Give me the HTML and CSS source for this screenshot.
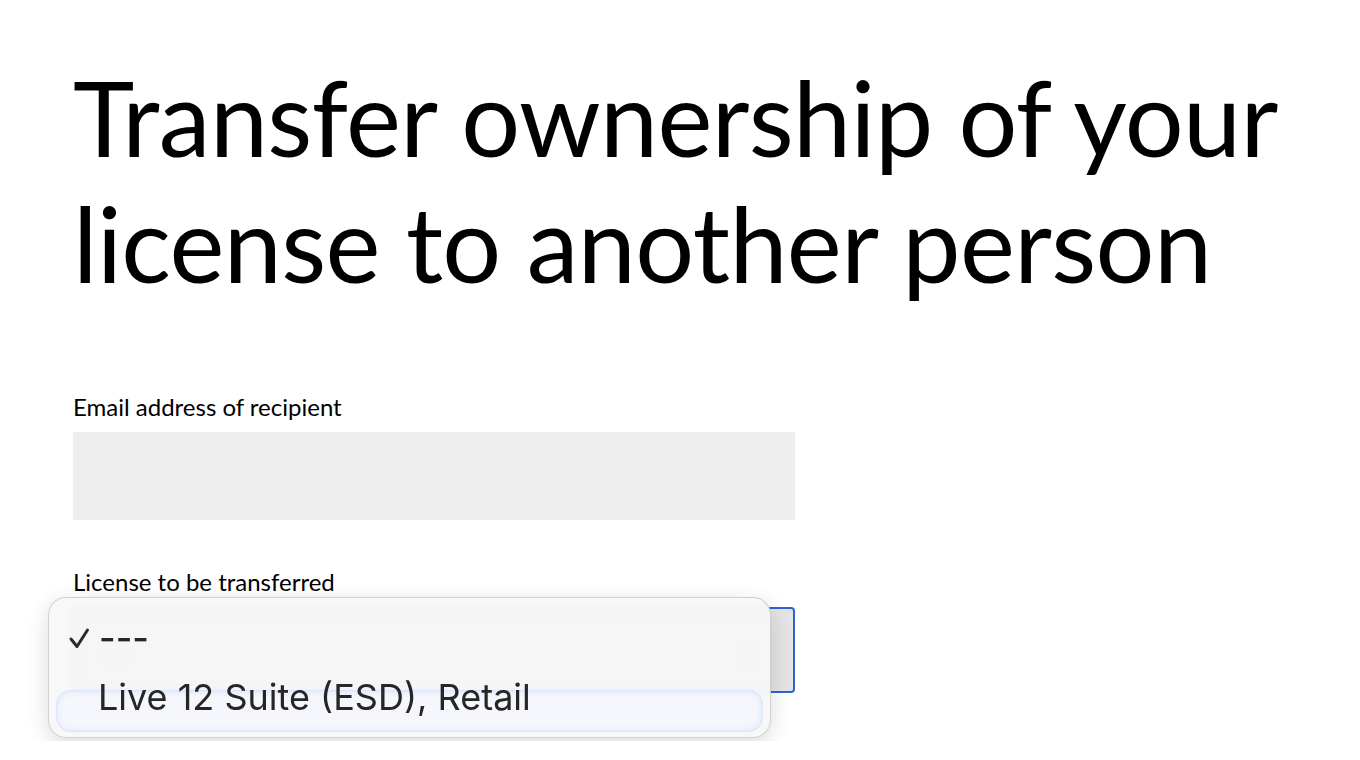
FILE: index.html
```html
<!DOCTYPE html>
<html lang="en">
<head>
  <meta charset="UTF-8">
  <meta name="viewport" content="width=device-width, initial-scale=1.0">
  <title>Transfer license</title>
  <link rel="stylesheet" href="styles.css">
</head>
<body>
  <main class="page">
    <h1>Transfer ownership of your license to another person</h1>

    <form class="transfer-form">
      <div class="field">
        <label for="recipient">Email address of recipient</label>
        <input type="email" id="recipient" class="text-input">
      </div>

      <div class="field">
        <label for="license">License to be transferred</label>
        <div class="select-wrap">
          <div class="select" id="license">
            <span class="select-value">---</span>
            <svg class="chevron" width="12" height="18" viewBox="0 0 12 18">
              <path d="M2 7l4-4 4 4M2 11l4 4 4-4" fill="none" stroke="#888" stroke-width="1.6" stroke-linecap="round" stroke-linejoin="round"/>
            </svg>
          </div>

          <!-- open popup list -->
          <div class="menu">
            <div class="menu-item checked">
              <svg class="check" width="22" height="22" viewBox="0 0 22 22">
                <path d="M3 12l6 7.5L19.5 3" fill="none" stroke="#2b2b2b" stroke-width="3" stroke-linecap="round" stroke-linejoin="round"/>
              </svg>
              <span>---</span>
            </div>
            <div class="menu-item active">
              <span>Live 12 Suite (ESD), Retail</span>
            </div>
          </div>
        </div>
      </div>
    </form>
  </main>
</body>
</html>
```

FILE: styles.css
```css
body {
  margin: 0;
  background: #fff;
  color: #000;
  font-family: Lato, "Noto Sans", sans-serif;
}
.page {
  padding: 54px 73px 0;
}
h1 {
  margin: 0;
  max-width: 1240px;
  font-size: 104px;
  font-weight: 400;
  line-height: 126px;
  letter-spacing: -0.6px;
}
.transfer-form {
  margin-top: 87px;
  width: 722px;
}
.field {
  margin-bottom: 48px;
}
label {
  display: block;
  font-size: 24px;
  line-height: 28px;
  margin-bottom: 11px;
}
.text-input {
  display: block;
  box-sizing: border-box;
  width: 100%;
  height: 88px;
  border: none;
  background: #eeeeee;
  border-radius: 0;
}
.select-wrap {
  position: relative;
}
.select {
  box-sizing: border-box;
  height: 86px;
  border: 2px solid #2f63d4;
  border-radius: 4px;
  background: #e4e4e4;
  display: flex;
  align-items: center;
  justify-content: space-between;
  padding: 10px 40px 0 30px;
  font-size: 22px;
  color: #666;
}
.menu {
  position: absolute;
  left: -25px;
  top: -10px;
  width: 723px;
  height: 141px;
  box-sizing: border-box;
  padding: 20px 7px 8px;
  border-radius: 18px;
  border: 1px solid rgba(0, 0, 0, 0.16);
  background: rgba(247, 247, 247, 0.9);
  backdrop-filter: blur(5px);
  box-shadow: 0 6px 22px rgba(0, 0, 0, 0.14);
  font-family: Inter, "Noto Sans", sans-serif;
  font-size: 36px;
  color: #262626;
  display: flex;
  flex-direction: column;
}
.menu-item {
  display: flex;
  align-items: center;
  height: 40px;
  padding-left: 42px;
  position: relative;
}
.menu-item.checked {
  padding-left: 12px;
  gap: 9px;
  font-weight: 500;
}
.menu-item.active {
  margin-top: 19px;
}
.menu-item.active::before {
  content: "";
  position: absolute;
  left: 0;
  right: 0;
  top: 13px;
  height: 40px;
  border-radius: 14px;
  border: 1px solid #dbe5fb;
  background: rgba(244, 247, 253, 0.7);
  box-shadow: inset 0 0 6px rgba(150, 180, 245, 0.35);
}
.menu-item span {
  position: relative;
}
```
